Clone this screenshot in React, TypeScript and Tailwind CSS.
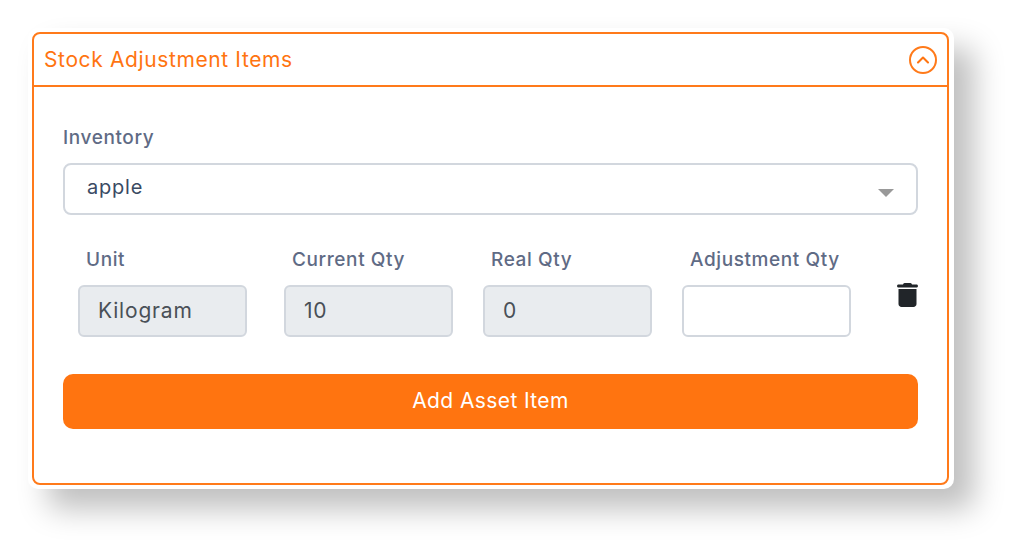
import { ChevronUp } from 'lucide-react'

const FONT = "font-['Inter','Noto_Sans',sans-serif]"

const Field = ({ label, value, disabled, className }: { label: string; value?: string; disabled?: boolean; className?: string }) => (
  <div className={`w-[169px] shrink-0 ${className ?? ''}`}>
    <label className="block pl-2 h-[26px] text-[19px] leading-[27px] font-medium tracking-[0.6px] text-[#5f6b85]">{label}</label>
    <div className={`mt-[13px] h-[52px] rounded-[6px] border-2 border-[#d2d7de] pl-[18px] text-[21px] leading-[48px] tracking-[0.8px] text-[#495057] ${disabled ? 'bg-[#e9ecef]' : 'bg-white'}`}>
      {value}
    </div>
  </div>
)

export default function App() {
  return (
    <div className={`h-[548px] w-[1020px] overflow-hidden bg-white pl-7 pt-7 ${FONT}`}>
      <div className="w-[926px] h-[461px] rounded-[10px] bg-white p-1 shadow-[20px_20px_30px_rgba(0,0,0,0.25)]">
        <div className="h-[453px] w-[917px] rounded-[8px] border-2 border-[#ff7a1a]">
          <div className="flex h-[53px] items-center justify-between border-b-2 border-[#ff7a1a] pl-[10px] pr-[10px]">
            <h2 className="text-[21px] font-normal tracking-[0.62px] text-[#ff7410]">Stock Adjustment Items</h2>
            <span className="flex h-[28px] w-[28px] items-center justify-center rounded-full border-2 border-[#ff7a1a] text-[#ff7410]">
              <ChevronUp size={20} strokeWidth={2.5} />
            </span>
          </div>
          <div className="px-[29px] pt-[37px]">
            <label className="block h-[26px] text-[19px] leading-[27px] font-medium tracking-[0.6px] text-[#5f6b85]">Inventory</label>
            <div className="relative mt-[13px] h-[52px] rounded-[8px] border-2 border-[#d2d7de] pl-[22px] text-[20px] leading-[44px] tracking-[0.8px] text-[#3a4a63]">
              apple
              <span className="absolute right-[22px] top-[24px] h-0 w-0 border-x-[8px] border-t-[8px] border-x-transparent border-t-[#999999]" />
            </div>
            <div className="mt-[31px] flex items-start pl-[15px]">
              <Field label="Unit" value="Kilogram" disabled />
              <Field label="Current Qty" value="10" disabled className="ml-[37px]" />
              <Field label="Real Qty" value="0" disabled className="ml-[30px]" />
              <Field label="Adjustment Qty" className="ml-[30px]" />
              <svg viewBox="0 0 448 512" className="ml-[46px] mt-[37px] h-[24px] w-[21px] shrink-0 fill-[#212529]">
                <path d="M135.2 17.7C140.6 6.8 151.7 0 163.8 0L284.2 0c12.1 0 23.2 6.8 28.6 17.7L320 32l96 0c17.7 0 32 14.3 32 32s-14.3 32-32 32L32 96C14.3 96 0 81.7 0 64S14.3 32 32 32l96 0 7.2-14.3zM32 128l384 0 0 320c0 35.3-28.7 64-64 64L96 512c-35.3 0-64-28.7-64-64l0-320z" />
              </svg>
            </div>
            <button className="mt-[37px] block h-[55px] w-[855px] rounded-[10px] bg-[#ff7410] pb-[2px] text-center text-[21px] font-normal tracking-[0.4px] text-white">
              Add Asset Item
            </button>
          </div>
        </div>
      </div>
    </div>
  )
}
